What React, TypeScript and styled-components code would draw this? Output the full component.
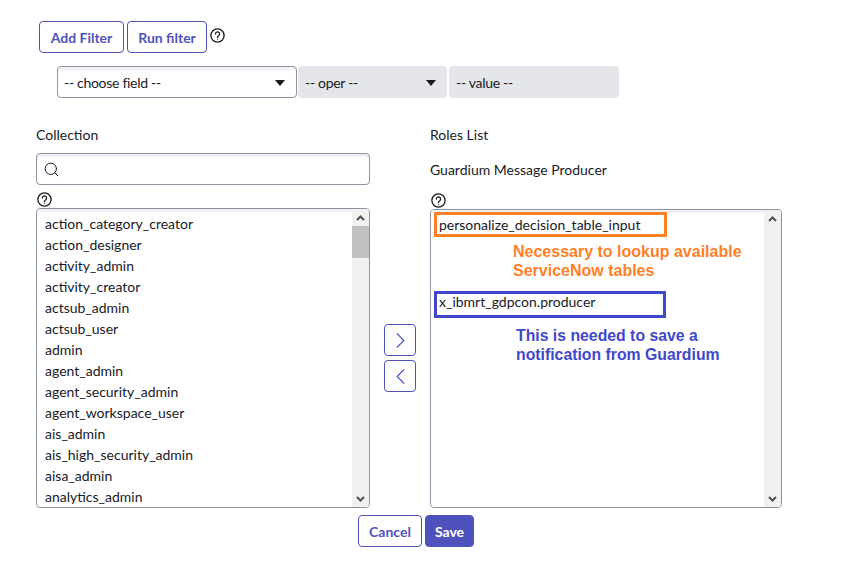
import React from "react";
import styled, { createGlobalStyle } from "styled-components";
import { Search, ChevronLeft, ChevronRight } from "lucide-react";

const GlobalStyle = createGlobalStyle`
  html, body {
    margin: 0;
    padding: 0;
    background: #fff;
  }
  body {
    font-family: Lato, "Liberation Sans", sans-serif;
    font-size: 14px;
    color: #181a1f;
  }
  * {
    box-sizing: border-box;
  }
`;

const Page = styled.div`
  width: 854px;
  height: 573px;
  padding: 21px 0 0 36px;
  overflow: hidden;
`;

const Toolbar = styled.div`
  display: flex;
  align-items: flex-start;
  gap: 3px;
  padding-left: 3px;
`;

const Button = styled.button<{ $primary?: boolean; $width: number }>`
  height: 32px;
  width: ${(p) => p.$width}px;
  padding: 0;
  border: 1px solid #4f52bd;
  border-radius: 4px;
  background: ${(p) => (p.$primary ? "#4f52bd" : "#fff")};
  color: ${(p) => (p.$primary ? "#fff" : "#4f52bd")};
  font-family: Lato, "Liberation Sans", sans-serif;
  font-size: 14px;
  font-weight: 700;
`;

const HelpMark = styled.svg`
  display: block;
  width: 15px;
  height: 15px;
  flex: none;
`;

const ToolbarHelp = styled.div`
  margin: 7px 0 0 0;
`;

const FilterRow = styled.div`
  display: flex;
  margin: 13px 0 0 21px;
`;

const FilterBox = styled.div<{ $width: number; $active?: boolean; $gap?: number }>`
  display: flex;
  align-items: center;
  justify-content: space-between;
  width: ${(p) => p.$width}px;
  height: 32px;
  margin-left: ${(p) => p.$gap ?? 0}px;
  padding: 0 11px 0 ${(p) => (p.$active ? 6 : 7)}px;
  border-radius: 4px;
  border: ${(p) => (p.$active ? "1px solid #8e93a3" : "none")};
  background: ${(p) => (p.$active ? "#fff" : "#e4e6e9")};
  box-shadow: ${(p) => (p.$active ? "inset 0 3px 0 #f0f1f3" : "none")};
  font-size: 14px;
  letter-spacing: -0.3px;
`;

const Caret = styled.span`
  width: 0;
  height: 0;
  margin-top: 1px;
  border-left: 5px solid transparent;
  border-right: 5px solid transparent;
  border-top: 6px solid #181a1f;
`;

const Columns = styled.div`
  display: flex;
  align-items: flex-start;
  margin-top: 28px;
`;

const LeftColumn = styled.div`
  display: flex;
  flex-direction: column;
  width: 334px;
`;

const RightColumn = styled.div`
  display: flex;
  flex-direction: column;
  width: 352px;
`;

const Label = styled.div`
  height: 17px;
  line-height: 17px;
  font-size: 14px;
`;

const RightLabel = styled(Label)`
  margin-bottom: 18px;
`;

const SearchBox = styled.div`
  display: flex;
  align-items: center;
  height: 32px;
  margin-top: 10px;
  padding-left: 6px;
  border: 1px solid #8e93a3;
  border-radius: 4px;
  box-shadow: inset 0 3px 0 #f0f1f3;
  color: #181a1f;
`;

const HelpRow = styled.div<{ $top: number; $bottom: number }>`
  margin: ${(p) => p.$top}px 0 ${(p) => p.$bottom}px 1px;
`;

const ListBox = styled.div<{ $height: number }>`
  display: flex;
  height: ${(p) => p.$height}px;
  border: 1px solid #8e93a3;
  border-radius: 4px;
  overflow: hidden;
`;

const Items = styled.div`
  flex: 1;
  min-width: 0;
  padding-top: 4px;
  box-shadow: inset 0 3px 0 #f0f1f3;
`;

const Item = styled.div`
  height: 21px;
  line-height: 21px;
  padding-left: 8px;
  font-size: 14px;
  white-space: nowrap;
`;

const ScrollTrack = styled.div`
  display: flex;
  flex-direction: column;
  width: 17px;
  flex: none;
  background: #f1f1f1;
`;

const ScrollEnd = styled.div`
  display: flex;
  align-items: center;
  justify-content: center;
  height: 17px;
  flex: none;
  color: #505050;
`;

const ScrollThumb = styled.div`
  height: 32px;
  background: #c1c1c1;
`;

const ScrollSpace = styled.div`
  flex: 1;
`;

const MoveColumn = styled.div`
  display: flex;
  flex-direction: column;
  gap: 4px;
  width: 60px;
  padding: 198px 0 0 14px;
`;

const MoveButton = styled.button`
  display: flex;
  align-items: center;
  justify-content: center;
  width: 32px;
  height: 32px;
  padding: 0;
  border: 1px solid #4f52bd;
  border-radius: 4px;
  background: #fff;
  color: #4f52bd;
`;

const RoleItems = styled.div`
  flex: 1;
  min-width: 0;
  padding: 2px 0 0 3px;
  box-shadow: inset 0 3px 0 #f0f1f3;
`;

const RoleHighlight = styled.div<{ $color: string; $height: number; $width: number; $line: number }>`
  width: ${(p) => p.$width}px;
  height: ${(p) => p.$height}px;
  padding: 0 0 0 2px;
  border: 3px solid ${(p) => p.$color};
  background: #fff;
  font-size: 14px;
  line-height: ${(p) => p.$line}px;
  white-space: nowrap;
`;

const Note = styled.div<{ $color: string; $left: number; $top: number; $bottom?: number; $size: number }>`
  margin: ${(p) => p.$top}px 0 ${(p) => p.$bottom ?? 0}px ${(p) => p.$left}px;
  color: ${(p) => p.$color};
  font-family: "Liberation Sans", Arial, sans-serif;
  font-size: ${(p) => p.$size}px;
  font-weight: 700;
  line-height: 19px;
  white-space: nowrap;
`;

const Footer = styled.div`
  display: flex;
  gap: 3px;
  margin: 7px 0 0 322px;
`;

const collection = [
  "action_category_creator",
  "action_designer",
  "activity_admin",
  "activity_creator",
  "actsub_admin",
  "actsub_user",
  "admin",
  "agent_admin",
  "agent_security_admin",
  "agent_workspace_user",
  "ais_admin",
  "ais_high_security_admin",
  "aisa_admin",
  "analytics_admin",
];

const ORANGE = "#ff7f27";
const BLUE = "#3f48cc";

const Help = () => (
  <HelpMark viewBox="0 0 15 15" fill="none" stroke="#181a1f" strokeWidth="1.3">
    <circle cx="7.5" cy="7.5" r="6.6" />
    <path d="M5.4 6a2.1 2.1 0 1 1 3.3 1.7c-.8.5-1.2.9-1.2 1.7" strokeLinecap="round" />
    <circle cx="7.5" cy="11.1" r=".7" fill="#181a1f" stroke="none" />
  </HelpMark>
);

const Scrollbar = ({ thumb }: { thumb?: boolean }) => (
  <ScrollTrack>
    <ScrollEnd>
      <svg width="9" height="6" viewBox="0 0 9 6" fill="none" stroke="currentColor" strokeWidth="2">
        <path d="M1 5l3.5-3.5L8 5" />
      </svg>
    </ScrollEnd>
    {thumb && <ScrollThumb />}
    <ScrollSpace />
    <ScrollEnd>
      <svg width="9" height="6" viewBox="0 0 9 6" fill="none" stroke="currentColor" strokeWidth="2">
        <path d="M1 1l3.5 3.5L8 1" />
      </svg>
    </ScrollEnd>
  </ScrollTrack>
);

const App: React.FC = () => {
  return (
    <Page>
      <GlobalStyle />
      <Toolbar>
        <Button $width={85}>Add Filter</Button>
        <Button $width={80}>Run filter</Button>
        <ToolbarHelp>
          <Help />
        </ToolbarHelp>
      </Toolbar>

      <FilterRow>
        <FilterBox $width={240} $active>
          -- choose field --
          <Caret />
        </FilterBox>
        <FilterBox $width={149} $gap={1}>
          -- oper --
          <Caret />
        </FilterBox>
        <FilterBox $width={170} $gap={2}>
          -- value --
        </FilterBox>
      </FilterRow>

      <Columns>
        <LeftColumn>
          <Label>Collection</Label>
          <SearchBox>
            <Search size={17} strokeWidth={1.4} />
          </SearchBox>
          <HelpRow $top={7} $bottom={1}>
            <Help />
          </HelpRow>
          <ListBox $height={300}>
            <Items>
              {collection.map((name) => (
                <Item key={name}>{name}</Item>
              ))}
            </Items>
            <Scrollbar thumb />
          </ListBox>
        </LeftColumn>

        <MoveColumn>
          <MoveButton>
            <ChevronRight size={27} strokeWidth={1} />
          </MoveButton>
          <MoveButton>
            <ChevronLeft size={27} strokeWidth={1} />
          </MoveButton>
        </MoveColumn>

        <RightColumn>
          <RightLabel>Roles List</RightLabel>
          <Label>Guardium Message Producer</Label>
          <HelpRow $top={15} $bottom={1}>
            <Help />
          </HelpRow>
          <ListBox $height={299}>
            <RoleItems>
              <RoleHighlight $color={ORANGE} $width={233} $height={25} $line={19}>
                personalize_decision_table_input
              </RoleHighlight>
              <Note $color={ORANGE} $size={16} $left={79} $top={5} $bottom={11}>
                Necessary to lookup available
                <br />
                ServiceNow tables
              </Note>
              <RoleHighlight $color={BLUE} $width={232} $height={27} $line={15}>
                x_ibmrt_gdpcon.producer
              </RoleHighlight>
              <Note $color={BLUE} $size={15.8} $left={82} $top={8}>
                This is needed to save a
                <br />
                notification from Guardium
              </Note>
            </RoleItems>
            <Scrollbar />
          </ListBox>
        </RightColumn>
      </Columns>

      <Footer>
        <Button $width={64}>Cancel</Button>
        <Button $width={49} $primary>
          Save
        </Button>
      </Footer>
    </Page>
  );
};

export default App;
